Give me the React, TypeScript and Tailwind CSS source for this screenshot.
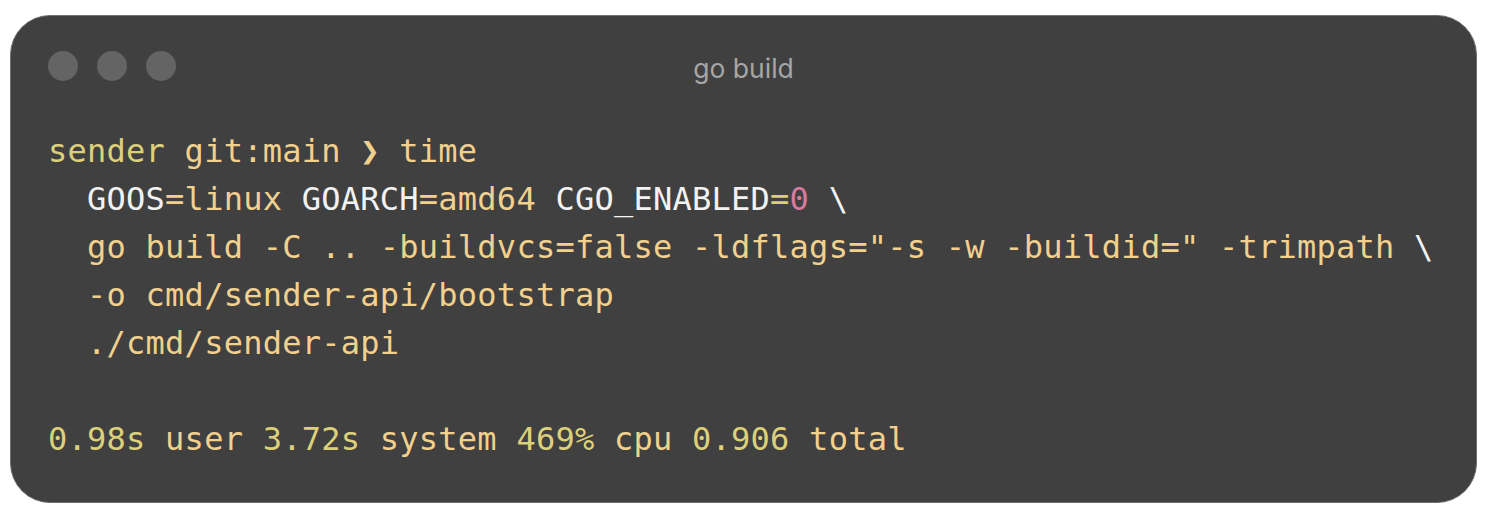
const Y = 'text-[#ddd07a]'
const P = 'text-[#f2d08e]'
const W = 'text-[#f2f2f2]'
const K = 'text-[#d97a9c]'

export default function App() {
  return (
    <div className="min-h-screen bg-white pt-[15px] pl-[10px] pr-[10px] pb-[11px]">
      <div className="w-[1467px] h-[488px] rounded-[40px] border-[1.5px] border-[#6e6e6e] bg-[#404040] flex flex-col">
        {/* ── Title bar ─────────────────────────────────── */}
        <div className="relative h-[100px] flex items-center pl-[37px]">
          <div className="flex gap-[19px] -mt-[1px]">
            <span className="w-[30px] h-[30px] rounded-full bg-[#646464]" />
            <span className="w-[30px] h-[30px] rounded-full bg-[#646464]" />
            <span className="w-[30px] h-[30px] rounded-full bg-[#646464]" />
          </div>
          <div
            className="absolute inset-x-0 top-[35px] text-center text-[26.5px] leading-[34px] text-[#a6a6a6]"
            style={{ fontFamily: 'Inter, "Noto Sans", sans-serif' }}
          >
            go build
          </div>
        </div>

        {/* ── Terminal ──────────────────────────────────── */}
        <pre
          className="pl-[37px] pt-[11px] text-[32px] leading-[48px] tracking-[0.25px] whitespace-pre"
          style={{ fontFamily: '"DejaVu Sans Mono", "Liberation Mono", monospace' }}
        >
          <div>
            <span className={Y}>sender</span>
            <span className={P}> git:main ❯ time</span>
          </div>
          <div>
            {'  '}
            <span className={W}>GOOS</span>
            <span className={P}>=linux </span>
            <span className={W}>GOARCH</span>
            <span className={P}>=amd64 </span>
            <span className={W}>CGO_ENABLED</span>
            <span className={Y}>=</span>
            <span className={K}>0</span>
            <span className={W}> \</span>
          </div>
          <div>
            {'  '}
            <span className={P}>go build -C .. -buildvcs=false -ldflags="-s -w -buildid=" -trimpath</span>
            <span className={W}> \</span>
          </div>
          <div>
            {'  '}
            <span className={P}>-o cmd/sender-api/bootstrap</span>
          </div>
          <div>
            {'  '}
            <span className={P}>./cmd/sender-api</span>
          </div>
          <div>&nbsp;</div>
          <div>
            <span className={Y}>0.98s</span>
            <span className={P}> user </span>
            <span className={Y}>3.72s</span>
            <span className={P}> system </span>
            <span className={Y}>469%</span>
            <span className={P}> cpu </span>
            <span className={Y}>0.906</span>
            <span className={P}> total</span>
          </div>
        </pre>
      </div>
    </div>
  )
}
